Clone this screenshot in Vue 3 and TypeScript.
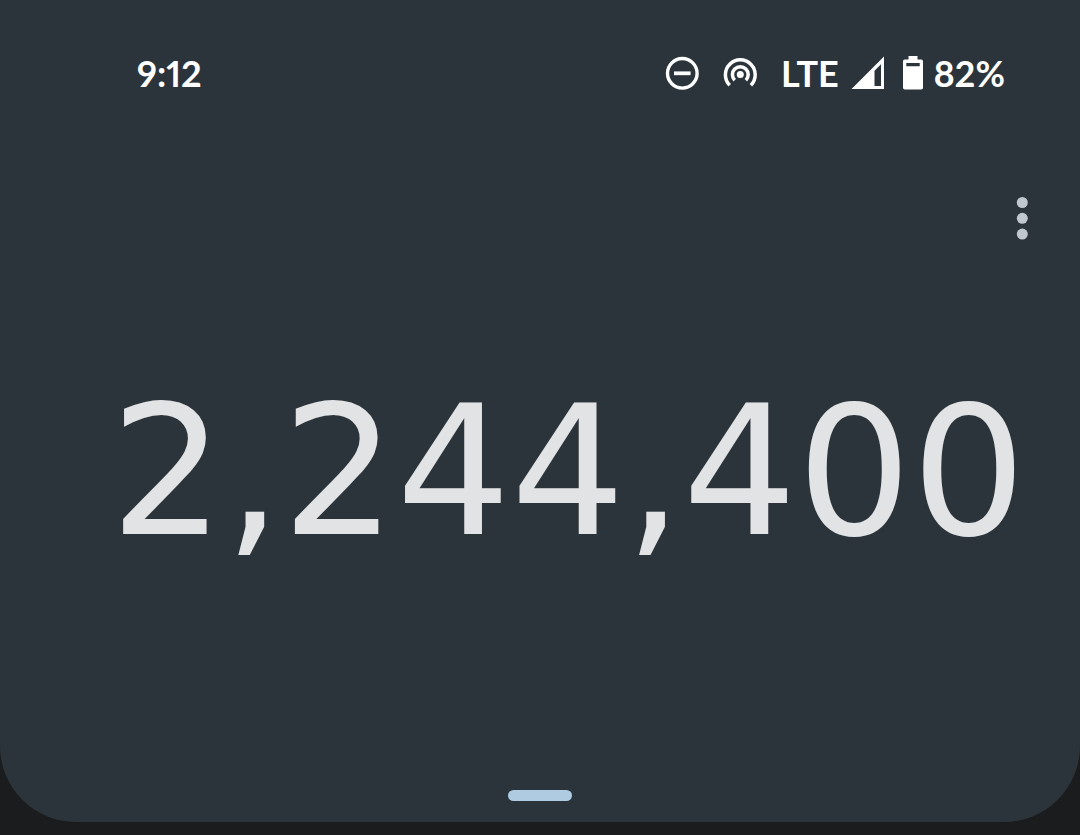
<script setup lang="ts">
import { ref } from 'vue'

const time = ref<string>('9:12')
const network = ref<string>('LTE')
const battery = ref<number>(82)
const result = ref<string>('2,244,400')
</script>

<template>
  <main class="page">
    <section class="display">
      <header class="status">
        <time class="time">{{ time }}</time>
        <div class="indicators">
          <svg class="dnd" width="34" height="34" viewBox="0 0 34 34" role="img" aria-label="Do not disturb">
            <circle cx="17.3" cy="17.3" r="14.8" fill="none" stroke="currentColor" stroke-width="3.4" />
            <path d="M9 17.3h16.6" fill="none" stroke="currentColor" stroke-width="3.8" />
          </svg>
          <svg class="hotspot" width="34" height="34" viewBox="0 0 34 34" role="img" aria-label="Hotspot">
            <circle cx="17.3" cy="18.6" r="3.5" fill="currentColor" />
            <g fill="none" stroke="currentColor" stroke-width="3.5">
              <path d="M6.7 29.2A14.9 14.9 0 1 1 27.9 29.2" />
              <path d="M11.7 24.2A7.9 7.9 0 1 1 22.9 24.2" />
            </g>
          </svg>
          <span class="network">{{ network }}</span>
          <svg class="signal" width="34" height="34" viewBox="0 0 34 34" role="img" aria-label="Signal strength">
            <path
              fill="currentColor"
              fill-rule="evenodd"
              d="M33 .5V33H.5ZM30 8.2L23.5 14.8V30H30Z"
            />
          </svg>
          <svg class="cell" width="22" height="34" viewBox="0 0 22 34" role="img" aria-label="Battery">
            <path
              fill="currentColor"
              fill-rule="evenodd"
              d="M6.5 0h9v3.5h3.7a1.8 1.8 0 0 1 1.8 1.8v26.4a1.8 1.8 0 0 1-1.8 1.8H2.8A1.8 1.8 0 0 1 1 31.7V5.3a1.8 1.8 0 0 1 1.8-1.8h3.7ZM4.3 7v3.3h13.4V7Z"
            />
          </svg>
          <span class="percent">{{ battery }}%</span>
        </div>
      </header>

      <div class="toolbar">
        <button class="more" type="button" aria-label="More options">
          <svg width="12" height="44" viewBox="0 0 12 44" aria-hidden="true">
            <circle cx="6.3" cy="6.5" r="5.5" fill="currentColor" />
            <circle cx="6.3" cy="22.3" r="5.5" fill="currentColor" />
            <circle cx="6.3" cy="38.1" r="5.5" fill="currentColor" />
          </svg>
        </button>
      </div>

      <output class="result">{{ result }}</output>

      <button class="handle" type="button" aria-label="Show history"><span class="grip"></span></button>
    </section>
  </main>
</template>

<style>
body {
  background: #1b1c1e;
}
</style>

<style scoped>
.page {
  box-sizing: border-box;
  display: flex;
  min-height: 100vh;
  padding-bottom: 13px;
  background: #1b1c1e;
  font-family: Lato, 'Liberation Sans', sans-serif;
}

.display {
  display: flex;
  flex: 1;
  flex-direction: column;
  min-width: 0;
  background: #2c343b;
  border-radius: 0 0 76px 76px;
}

.status {
  display: flex;
  align-items: center;
  justify-content: space-between;
  padding: 52px 75px 0 137px;
  color: #fff;
  font-size: 36px;
  font-weight: 700;
  line-height: 42px;
}

.time {
  font-variant-numeric: proportional-nums;
}

.indicators {
  display: flex;
  align-items: center;
}

.indicators svg {
  display: block;
}

.hotspot {
  margin-left: 24px;
}

.network {
  margin-left: 24px;
}

.signal {
  margin-left: 12px;
}

.cell {
  margin: 0 10px 0 17px;
}

.toolbar {
  display: flex;
  justify-content: flex-end;
  padding: 90px 40px 0 0;
}

.more {
  display: flex;
  justify-content: center;
  width: 36px;
  padding: 12px 0;
  border: 0;
  background: none;
  color: #c1c7ce;
  cursor: pointer;
}

.result {
  display: block;
  margin-top: 114px;
  padding-right: 54px;
  color: #e2e3e5;
  font-family: 'DejaVu Sans', sans-serif;
  font-size: 180px;
  font-weight: 400;
  line-height: 212px;
  text-align: right;
}

.handle {
  display: flex;
  justify-content: center;
  align-self: center;
  margin-top: auto;
  padding: 12px 24px 21px;
  border: 0;
  background: none;
  cursor: pointer;
}

.grip {
  width: 64px;
  height: 11px;
  border-radius: 6px;
  background: #aecbe1;
}
</style>
